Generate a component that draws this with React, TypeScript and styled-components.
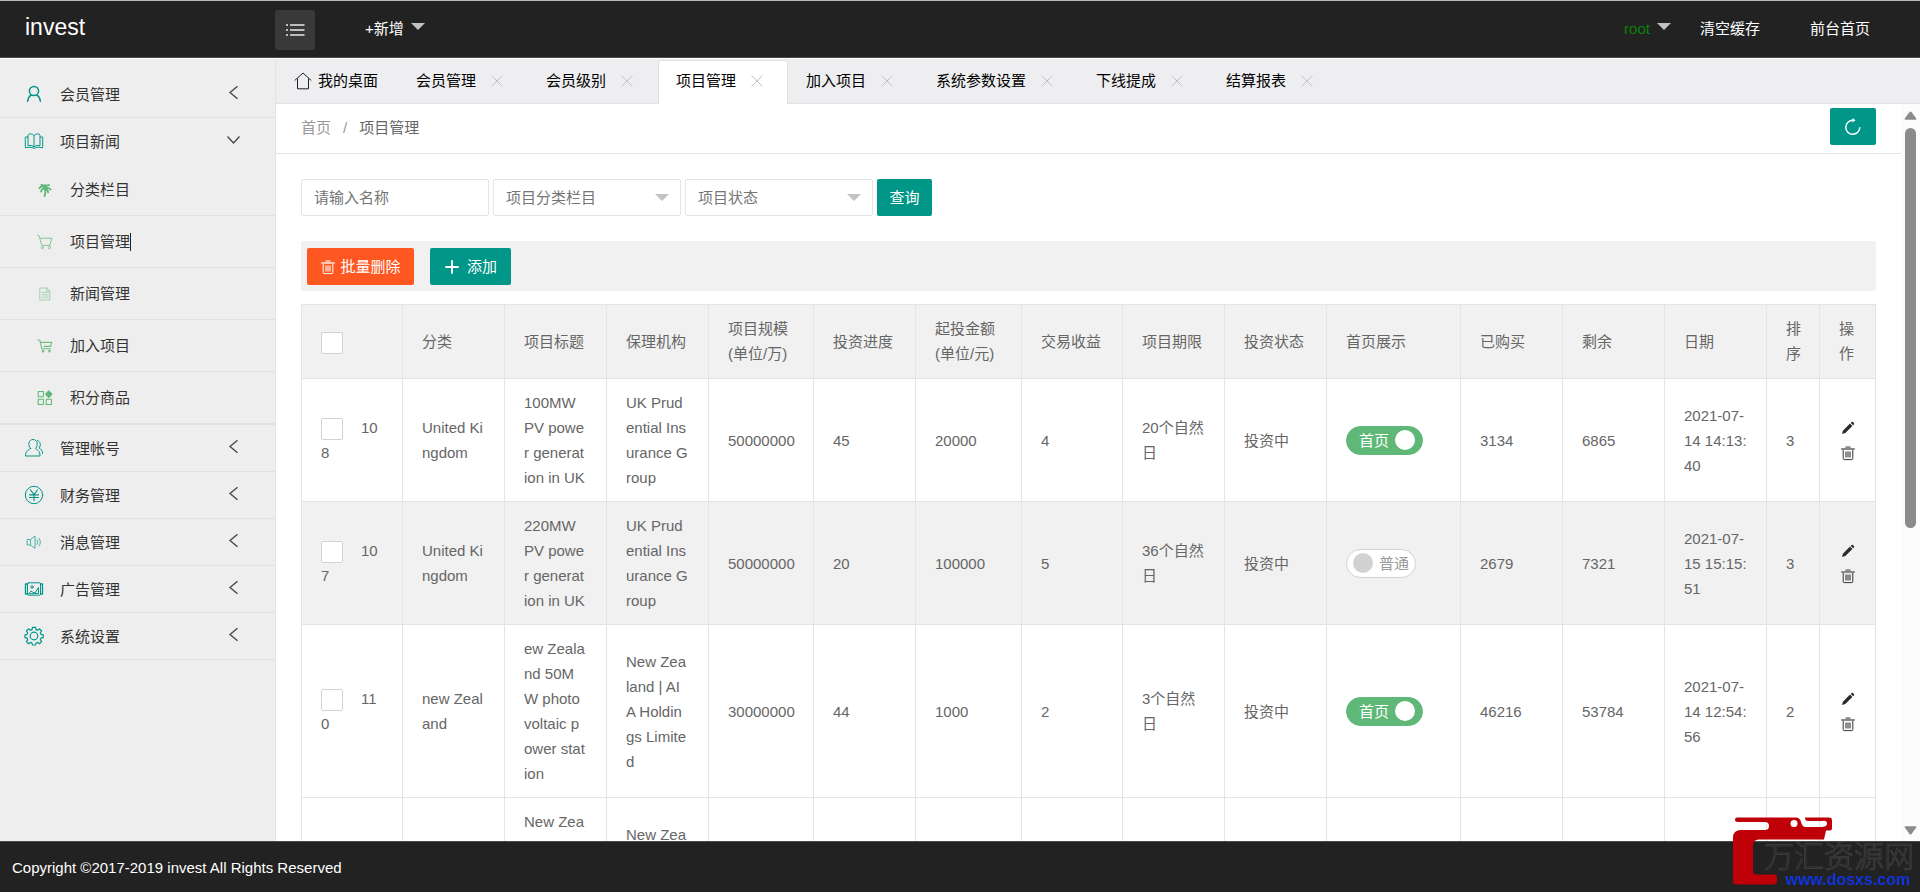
import React from "react";
import styled, { createGlobalStyle, css } from "styled-components";

const teal = "#009688";
const line = "#e4e4e4";

const GlobalStyle = createGlobalStyle`
  * { box-sizing: border-box; }
  body {
    margin: 0;
    background: #fff;
    color: #666;
    font: 15px/25px "Liberation Sans", "Noto Sans CJK SC", sans-serif;
  }
  button, input, select { font: inherit; color: inherit; }
  button { border: 0; padding: 0; background: none; cursor: pointer; }
  a { color: inherit; text-decoration: none; }
  svg { display: block; flex: none; }
`;

/* ---------- shell ---------- */

const Shell = styled.div`
  display: grid;
  grid-template: auto minmax(0, 1fr) auto / 276px minmax(0, 1fr);
  height: 100vh;
`;

const Header = styled.header`
  grid-column: 1 / -1;
  display: flex;
  align-items: center;
  height: 58px;
  margin-bottom: 1px;
  padding-right: 50px;
  background: #222;
  border-top: 1px solid #b4bab8;
  border-bottom: 1px solid #4c4848;
  color: #fff;
`;

const Brand = styled.a`
  width: 275px;
  padding: 0 0 4px 25px;
  font-size: 23px;
`;

const MenuToggle = styled.button`
  display: flex;
  align-items: center;
  justify-content: center;
  width: 40px;
  height: 40px;
  margin-top: 2px;
  border-radius: 3px;
  background: #393939;
`;

const TopMenu = styled.nav`
  display: flex;
  align-items: center;
  gap: 50px;
  flex: 1;
  padding: 0 0 2px 50px;
`;

const TopLink = styled.a`
  white-space: nowrap;
`;

const TopDrop = styled.button<{ $color?: string; $push?: boolean }>`
  display: flex;
  align-items: center;
  gap: 7px;
  color: ${(p) => p.$color ?? "#fff"};
  ${(p) => p.$push && css`margin: 0 -21px 0 auto;`}
  svg { margin-bottom: 4px; }
`;

const Footer = styled.footer`
  grid-column: 1 / -1;
  height: 51px;
  padding: 14px 12px 0;
  line-height: 24px;
  background: #222;
  border-top: 1px solid #4c4c4c;
  color: #fff;
`;

/* ---------- sidebar ---------- */

const Sidebar = styled.nav`
  padding-top: 12px;
  overflow: hidden;
  background: #eee;
  border-right: 1px solid ${line};
  color: #333;
`;

const Group = styled.div`
  border-bottom: 1px solid #e1e1e1;
`;

const GroupHead = styled.button`
  display: flex;
  align-items: center;
  width: 100%;
  height: 46px;
  padding: 0 34px 0 24px;
  text-align: left;
`;

const GroupName = styled.span`
  flex: 1;
  padding-left: 16px;
`;

const Arrow = styled.span`
  display: flex;
  justify-content: center;
  width: 15px;
  padding-bottom: 3px;
`;

const SubItem = styled.a`
  display: flex;
  align-items: center;
  height: 52px;
  padding-left: 37px;
  border-bottom: 1px solid #e1e1e1;
`;

const SubName = styled.span<{ $caret?: boolean }>`
  margin-left: 17px;
  line-height: 18px;
  ${(p) => p.$caret && css`box-shadow: 1px 0 0 #222;`}
`;

/* ---------- tabs ---------- */

const Main = styled.main`
  display: flex;
  flex-direction: column;
  min-width: 0;
`;

const TabBar = styled.div`
  display: flex;
  height: 45px;
  padding-top: 1px;
  background: #eeeef0;
  border-bottom: 1px solid #e2e2e2;
  color: #000;
`;

const HomeTab = styled.button`
  display: flex;
  align-items: center;
  gap: 6px;
  padding: 0 20px 2px 18px;
  color: #000;
`;

const Tab = styled.div<{ $active?: boolean }>`
  display: flex;
  align-items: center;
  gap: 14px;
  height: 44px;
  margin-bottom: -1px;
  padding: 0 23px 4px 17px;
  border: 1px solid transparent;
  border-width: 1px 1px 0;
  ${(p) =>
    p.$active &&
    css`
      background: #fff;
      border-color: #e2e2e2;
      border-radius: 3px 3px 0 0;
    `}
`;

/* ---------- page ---------- */

const Viewport = styled.div`
  display: flex;
  flex: 1;
  min-height: 0;
`;

const Page = styled.div`
  flex: 1;
  min-width: 0;
  overflow: hidden;
`;

const ScrollTrack = styled.div`
  display: flex;
  flex-direction: column;
  align-items: center;
  gap: 8px;
  width: 19px;
  padding: 7px 0 6px;
  background: #fcfcfc;
`;

const ScrollLane = styled.div`
  flex: 1;
  width: 11px;
`;

const ScrollThumb = styled.div`
  height: 58%;
  border-radius: 6px;
  background: #8b8b8b;
`;

const CrumbBar = styled.div`
  display: flex;
  align-items: center;
  justify-content: space-between;
  height: 50px;
  padding: 0 25px 2px;
  border-bottom: 1px solid #e2e2e2;
`;

const Crumbs = styled.div`
  display: flex;
  gap: 12px;
  color: #999;
`;

const Current = styled.span`
  color: #666;
`;

const Button = styled.button<{ $bg?: string; $width: number; $gap?: number }>`
  display: flex;
  align-items: center;
  justify-content: center;
  gap: ${(p) => p.$gap ?? 4}px;
  width: ${(p) => p.$width}px;
  height: 37px;
  border-radius: 2px;
  background: ${(p) => p.$bg ?? teal};
  color: #fff;
  white-space: nowrap;
`;

const RefreshButton = styled(Button)`
  margin-bottom: 2px;
`;

const Body = styled.div`
  padding: 25px 25px 0;
`;

const SearchRow = styled.form`
  display: flex;
  gap: 4px;
  margin-bottom: 25px;
`;

const Field = styled.div`
  position: relative;
  width: 188px;
  height: 37px;
  svg { position: absolute; right: 12px; top: 15px; pointer-events: none; }
`;

const fieldStyle = css`
  width: 100%;
  height: 100%;
  padding: 0 12px;
  border: 1px solid ${line};
  border-radius: 2px;
  background: #fff;
  color: #757575;
  outline: 0;
`;

const TextInput = styled.input`
  ${fieldStyle}
  &::placeholder { color: #757575; }
`;

const SelectBox = styled.select`
  ${fieldStyle}
  appearance: none;
`;

const Toolbar = styled.div`
  display: flex;
  gap: 16px;
  padding: 7px 6px 6px;
  margin-bottom: 13px;
  border-radius: 2px;
  background: #f1f1f1;
`;

/* ---------- table ---------- */

const Table = styled.table`
  width: 100%;
  table-layout: fixed;
  border-collapse: collapse;
`;

const Th = styled.th`
  padding: 11px 19px 12px;
  border: 1px solid ${line};
  background: #f1f1f1;
  font-weight: 400;
  text-align: left;
  word-break: break-all;
`;

const Td = styled.td<{ $nowrap?: boolean }>`
  padding: 11px 19px;
  border: 1px solid ${line};
  word-break: break-all;
  ${(p) => p.$nowrap && css`white-space: nowrap;`}
`;

const Row = styled.tr<{ $shade?: boolean }>`
  background: ${(p) => (p.$shade ? "#f1f1f1" : "#fff")};
`;

const Check = styled.input`
  appearance: none;
  display: inline-block;
  width: 22px;
  height: 22px;
  margin: 0 18px 0 0;
  border: 1px solid #d2d2d2;
  border-radius: 2px;
  background: #fff;
  vertical-align: middle;
`;

const SwitchInput = styled.input`
  position: absolute;
  inset: 0;
  margin: 0;
  opacity: 0;
`;

const SwitchTrack = styled.label<{ $on: boolean }>`
  position: relative;
  display: flex;
  align-items: center;
  flex-direction: ${(p) => (p.$on ? "row" : "row-reverse")};
  justify-content: space-between;
  width: ${(p) => (p.$on ? 77 : 70)}px;
  height: 29px;
  padding: ${(p) => (p.$on ? "0 7px 0 12px" : "0 6px")};
  border: 1px solid ${(p) => (p.$on ? "#5fb878" : "#d2d2d2")};
  border-radius: 15px;
  background: ${(p) => (p.$on ? "#5fb878" : "#fff")};
  color: ${(p) => (p.$on ? "#fff" : "#999")};
`;

const Knob = styled.span<{ $on: boolean }>`
  width: 20px;
  height: 20px;
  border-radius: 50%;
  background: ${(p) => (p.$on ? "#fff" : "#d2d2d2")};
`;

const RowAction = styled.button`
  display: flex;
  align-items: center;
  justify-content: center;
  width: 18px;
  height: 25px;
  color: #333;
`;

/* ---------- watermark ---------- */

const Mark = styled.a`
  position: fixed;
  right: 6px;
  bottom: 3px;
  width: 182px;
  height: 72px;
`;

const MarkArt = styled.svg`
  position: absolute;
  left: 0;
  top: 0;
`;

const MarkText = styled.div`
  position: absolute;
  right: 0;
  bottom: 2px;
  text-align: right;
`;

const MarkName = styled.div`
  font-size: 30px;
  font-weight: 300;
  line-height: 30px;
  color: #222;
  -webkit-text-stroke: 1px #3c3c3c;
`;

const MarkUrl = styled.div`
  padding-right: 4px;
  font-size: 16px;
  font-weight: 700;
  line-height: 15px;
  color: #0f34e0;
`;

/* ---------- icons ---------- */

type IconProps = { size?: number; color?: string; width?: number; children: React.ReactNode };

const Icon = ({ size = 20, color = "currentColor", width = 1, children }: IconProps) => (
  <svg
    width={size}
    height={size}
    viewBox="0 0 20 20"
    fill="none"
    stroke={color}
    strokeWidth={width}
    strokeLinecap="round"
    strokeLinejoin="round"
    aria-hidden="true"
  >
    {children}
  </svg>
);

const CaretDown = ({ color = "#c2c2c2" }: { color?: string }) => (
  <svg width="14" height="7" viewBox="0 0 14 7" aria-hidden="true">
    <path d="M0 0h14L7 7z" fill={color} />
  </svg>
);

const Close = () => (
  <svg width="14" height="14" viewBox="0 0 14 14" stroke="#c2c2c2" aria-hidden="true">
    <path d="M1.5 1.5l11 11M12.5 1.5l-11 11" />
  </svg>
);

const Chevron = ({ open }: { open?: boolean }) => (
  <svg width="15" height="15" viewBox="0 0 15 15" fill="none" stroke="#444" strokeWidth="1.3" aria-hidden="true">
    <path d={open ? "M1.5 4.5l6 6.5 6-6.5" : "M11.5 1.2L4 7.5l7.5 6.3"} />
  </svg>
);

const TrashIcon = ({ cap = "#888" }: { cap?: string }) => (
  <svg width="16" height="16" viewBox="0 0 16 16" fill="none" aria-hidden="true">
    <path d="M1.200 4h13.600M5.500 2.400h5" stroke={cap} strokeWidth="2.200" />
    <path d="M3.200 5v8.600q0 1 1 1h7.600q1 0 1-1V5" stroke="currentColor" strokeWidth="1" />
    <path d="M6 6.500v6M8 6.500v6M10 6.500v6" stroke="currentColor" strokeWidth="1.100" />
  </svg>
);

const groupIcons: Record<string, React.ReactNode> = {
  user: (
    <Icon color={teal} width={1.5}>
      <circle cx="10" cy="7" r="4.6" />
      <path d="M7.2 10.8Q4.2 12.8 3.600 17.200M12.8 10.8q3 2 3.600 6.400" />
    </Icon>
  ),
  book: (
    <Icon color={teal} width={1}>
      <path d="M10 4.5Q8.500 2.800 6.500 2.800 4.200 2.800 4 4.500v10.200q3.500-1 6 1 2.500-2 6-1V4.500Q15.800 2.800 13.500 2.800 11.500 2.800 10 4.500v11" />
      <path d="M3.800 6H1.300v10.800q5-1.500 8.700.4 3.700-1.900 8.700-.4V6h-2.500" />
    </Icon>
  ),
  users: (
    <Icon color={teal}>
      <path d="M6.500 10.500C3.500 7.500 4.500 1.500 9 1.500s5.500 6 2.500 9c1.500 1.500 4.500 2 4.500 7.500H1.500c0-5.500 3.500-6 5-7.500z" />
      <path d="M13.500 2.500c3 .8 3.800 5 1.500 7.500 2 1 3.500 2.500 3.700 5.500" />
    </Icon>
  ),
  yen: (
    <Icon color={teal}>
      <circle cx="10" cy="10" r="8.700" />
      <path d="M6.500 5l3.500 4.500L13.500 5M10 9.500v6M5.500 9.800h9M5.500 12.500h9" strokeWidth="1.200" />
    </Icon>
  ),
  sound: (
    <Icon color="#4bb0a5">
      <path d="M3.500 7.500h3v5.500h-3zM6.500 7.500L11 4v12.500L6.500 13M13 8q1.500 2.200 0 4.500M15 6.300q2.800 3.900 0 7.700" />
    </Icon>
  ),
  picture: (
    <Icon color={teal}>
      <rect x="3.500" y="3.800" width="13" height="12.400" rx="1" />
      <path d="M3.500 5h-2v10h2M16.500 5h2v10h-2" strokeWidth="1.300" />
      <circle cx="8" cy="8" r="1.200" />
      <path d="M5 14.500l2-2.500 1.500 1 2.500 1L14.500 8.500v5.500z" />
    </Icon>
  ),
  gear: (
    <Icon color={teal} width={1.2}>
      <circle cx="10" cy="10" r="3.800" />
      <path d="M8.400 1.300h3.200l.4 2.300 1.500.7 2-1.500 2.100 2.200-1.300 1.900.6 1.500 2.300.4v2.900l-2.300.4-.6 1.600 1.300 1.900-2.200 2.100-1.900-1.300-1.500.6-.4 2H8.400L8 17l-1.500-.6-1.900 1.300-2.200-2.100 1.300-1.900-.6-1.600-2.100-.4V8.800l2.100-.4.6-1.500-1.300-1.900L4.500 2.800l2 1.500L8 3.600z" />
    </Icon>
  ),
};

const green = "#5fb878";
const subIcons: Record<string, React.ReactNode> = {
  palm: (
    <Icon size={16} color={green} width={2.2}>
      <path d="M10 8Q6 3 3 8M10 8Q6 7.500 5 12M10 8Q8 3 5.500 3.500M10 8q2-5 5-4M10 8q4-2 7 1.500M10 8q3.500 1 4 5M10 8v-4.500" />
      <path d="M10 8q1.500 4-.5 9.500" strokeWidth="2.400" />
    </Icon>
  ),
  cart: (
    <Icon size={16} color="#7cc48f" width={1.2}>
      <path d="M.8 1.500l1.700.6L6 14.200h10.500M4.500 5.300h14l-2.200 8" />
      <circle cx="6.800" cy="17" r="1.400" />
      <circle cx="15.500" cy="17" r="1.400" />
    </Icon>
  ),
  doc: (
    <Icon size={16} color="#8fca9e">
      <path d="M4 2.500h8l4 3.500v11.500H4zM12 2.500V6h4M6 8h8M6 11h8M6 14h8" />
    </Icon>
  ),
  cartFull: (
    <Icon size={16} color="#6fbf85" width={1.4}>
      <path d="M1 2.500h2.500L6 13.500h11M4 5.500h14.500L17 10.500H9" />
      <circle cx="7.500" cy="16.500" r="1" />
      <circle cx="15.500" cy="16.500" r="1" />
    </Icon>
  ),
  blocks: (
    <Icon size={16} color={green} width={1.3}>
      <path d="M1.500 2h6.500v6.500H1.500zM1.500 11.500h6.500V18H1.500zM11.500 11.500H18V18h-6.500z" />
      <path d="M14.700 1l4 4.200-4 4.200-4-4.200z" fill={green} />
    </Icon>
  ),
};

/* ---------- data ---------- */

const subItems = [
  { icon: "palm", name: "分类栏目" },
  { icon: "cart", name: "项目管理", caret: true },
  { icon: "doc", name: "新闻管理" },
  { icon: "cartFull", name: "加入项目" },
  { icon: "blocks", name: "积分商品" },
];

const groups = [
  { icon: "user", name: "会员管理" },
  { icon: "book", name: "项目新闻", open: true },
  { icon: "users", name: "管理帐号" },
  { icon: "yen", name: "财务管理" },
  { icon: "sound", name: "消息管理" },
  { icon: "picture", name: "广告管理" },
  { icon: "gear", name: "系统设置" },
];

const tabs = ["会员管理", "会员级别", "项目管理", "加入项目", "系统参数设置", "下线提成", "结算报表"];

const columns: [string, number][] = [
  ["分类", 102],
  ["项目标题", 102],
  ["保理机构", 102],
  ["项目规模(单位/万)", 105],
  ["投资进度", 102],
  ["起投金额(单位/元)", 106],
  ["交易收益", 101],
  ["项目期限", 102],
  ["投资状态", 102],
  ["首页展示", 134],
  ["已购买", 102],
  ["剩余", 102],
  ["日期", 102],
  ["排序", 53],
  ["操作", 56],
];

type Project = {
  id: string;
  title: string[];
  numbers: string[];
  term: string[];
  home: boolean;
  sales: string[];
  hovered?: boolean;
};

const projects: Project[] = [
  {
    id: "108",
    title: ["United Kingdom", "100MW PV power generation in UK", "UK Prudential Insurance Group"],
    numbers: ["50000000", "45", "20000", "4"],
    term: ["20个自然日", "投资中"],
    home: true,
    sales: ["3134", "6865", "2021-07-14 14:13:40", "3"],
  },
  {
    id: "107",
    title: ["United Kingdom", "220MW PV power generation in UK", "UK Prudential Insurance Group"],
    numbers: ["50000000", "20", "100000", "5"],
    term: ["36个自然日", "投资中"],
    home: false,
    sales: ["2679", "7321", "2021-07-15 15:15:51", "3"],
    hovered: true,
  },
  {
    id: "110",
    title: ["new Zealand", "ew Zealand 50MW photovoltaic power station", "New Zealand | AIA Holdings Limited"],
    numbers: ["30000000", "44", "1000", "2"],
    term: ["3个自然日", "投资中"],
    home: true,
    sales: ["46216", "53784", "2021-07-14 12:54:56", "2"],
  },
  {
    id: "109",
    title: ["new Zealand", "New Zealand 50MW photovoltaic power station", "New Zealand | AIA Holdings Limited"],
    numbers: ["30000000", "40", "5000", "3"],
    term: ["5个自然日", "投资中"],
    home: true,
    sales: ["3120", "6880", "2021-07-14 12:50:12", "2"],
  },
];

/* ---------- parts ---------- */

const ProjectRow = ({ project }: { project: Project }) => (
  <Row $shade={project.hovered}>
    <Td>
      <Check type="checkbox" id={`pick-${project.id}`} />
      <label htmlFor={`pick-${project.id}`}>{project.id}</label>
    </Td>
    {project.title.map((value, i) => (
      <Td key={i}>{value}</Td>
    ))}
    {project.numbers.map((value, i) => (
      <Td key={i} $nowrap>
        {value}
      </Td>
    ))}
    {project.term.map((value, i) => (
      <Td key={i}>{value}</Td>
    ))}
    <Td>
      <SwitchTrack $on={project.home}>
        <SwitchInput type="checkbox" role="switch" defaultChecked={project.home} />
        <span>{project.home ? "首页" : "普通"}</span>
        <Knob $on={project.home} />
      </SwitchTrack>
    </Td>
    {project.sales.map((value, i) => (
      <Td key={i}>{value}</Td>
    ))}
    <Td>
      <RowAction type="button" aria-label="编辑">
        <svg width="14" height="14" viewBox="0 0 14 14" fill="#2b2b2b" aria-hidden="true">
          <path d="M1 13l.9-3.300L9 2.600 11.400 5 4.300 12.100zM9.800 1.900l.8-.8q.7-.7 1.400 0l.9.900q.7.700 0 1.400l-.8.800z" />
        </svg>
      </RowAction>
      <RowAction type="button" aria-label="删除">
        <TrashIcon />
      </RowAction>
    </Td>
  </Row>
);

export default function App() {
  return (
    <>
      <GlobalStyle />
      <Shell>
        <Header>
          <Brand href="#">invest</Brand>
          <MenuToggle type="button" aria-label="菜单">
            <svg width="20" height="14" viewBox="0 0 20 14" stroke="#e8e8e8" strokeWidth="1.500" aria-hidden="true">
              <path d="M5 2h14.500M5 7h14.500M5 12h14.500M1 2h2M1 7h2M1 12h2" />
            </svg>
          </MenuToggle>
          <TopMenu>
            <TopDrop type="button">
              +新增 <CaretDown />
            </TopDrop>
            <TopDrop type="button" $color="#0a800a" $push>
              root <CaretDown />
            </TopDrop>
            <TopLink href="#">清空缓存</TopLink>
            <TopLink href="#">前台首页</TopLink>
          </TopMenu>
        </Header>

        <Sidebar>
          {groups.map((group) => (
            <Group key={group.name}>
              <GroupHead type="button">
                {groupIcons[group.icon]}
                <GroupName>{group.name}</GroupName>
                <Arrow>
                  <Chevron open={group.open} />
                </Arrow>
              </GroupHead>
              {group.open &&
                subItems.map((item) => (
                  <SubItem href="#" key={item.name}>
                    {subIcons[item.icon]}
                    <SubName $caret={item.caret}>{item.name}</SubName>
                  </SubItem>
                ))}
            </Group>
          ))}
        </Sidebar>

        <Main>
          <TabBar>
            <HomeTab type="button">
              <svg width="18" height="18" viewBox="0 0 18 18" fill="none" stroke="#222" aria-hidden="true">
                <path d="M.7 8.500L9 1l8.300 7.500M3.500 6.500v10.300h11V6.500" />
              </svg>
              我的桌面
            </HomeTab>
            {tabs.map((tab) => (
              <Tab key={tab} $active={tab === "项目管理"}>
                <button type="button">{tab}</button>
                <button type="button" aria-label={`关闭${tab}`}>
                  <Close />
                </button>
              </Tab>
            ))}
          </TabBar>

          <Viewport>
            <Page>
              <CrumbBar>
                <Crumbs>
                  <a href="#">首页</a>
                  <span>/</span>
                  <Current>项目管理</Current>
                </Crumbs>
                <RefreshButton type="button" $width={46} aria-label="刷新">
                  <svg width="18" height="18" viewBox="0 0 18 18" fill="none" stroke="#fff" strokeWidth="1.500" aria-hidden="true">
                    <path d="M9 2.300a7 7 0 1 0 6.800 7" />
                    <path d="M8.500 0l3 2.300-3 2.300z" fill="#fff" stroke="none" />
                  </svg>
                </RefreshButton>
              </CrumbBar>

              <Body>
                <SearchRow onSubmit={(e) => e.preventDefault()}>
                  <Field>
                    <TextInput type="text" placeholder="请输入名称" aria-label="名称" />
                  </Field>
                  <Field>
                    <SelectBox aria-label="项目分类栏目">
                      <option>项目分类栏目</option>
                    </SelectBox>
                    <CaretDown />
                  </Field>
                  <Field>
                    <SelectBox aria-label="项目状态">
                      <option>项目状态</option>
                    </SelectBox>
                    <CaretDown />
                  </Field>
                  <Button type="submit" $width={55}>
                    查询
                  </Button>
                </SearchRow>

                <Toolbar>
                  <Button type="button" $bg="#ff5722" $width={107}>
                    <TrashIcon cap="#ffc4b0" />
                    批量删除
                  </Button>
                  <Button type="button" $width={81} $gap={7}>
                    <Icon size={16} width={2.4}>
                      <path d="M10 2.500v15M2.500 10h15" />
                    </Icon>
                    添加
                  </Button>
                </Toolbar>

                <Table>
                  <colgroup>
                    <col width={101} />
                    {columns.map(([name, width]) => (
                      <col key={name} width={width} />
                    ))}
                  </colgroup>
                  <thead>
                    <tr>
                      <Th>
                        <Check type="checkbox" aria-label="全选" />
                      </Th>
                      {columns.map(([name]) => (
                        <Th key={name}>{name}</Th>
                      ))}
                    </tr>
                  </thead>
                  <tbody>
                    {projects.map((project) => (
                      <ProjectRow key={project.id} project={project} />
                    ))}
                  </tbody>
                </Table>
              </Body>
            </Page>
            <ScrollTrack aria-hidden="true">
              <svg width="13" height="9" viewBox="0 0 13 9">
                <path d="M6.500.500q.6 0 1 .6l4.800 6.400q.5 1-.6 1.200H1.300q-1.100-.2-.6-1.200L5.500 1.100q.4-.6 1-.6z" fill="#8b8b8b" />
              </svg>
              <ScrollLane>
                <ScrollThumb />
              </ScrollLane>
              <svg width="13" height="9" viewBox="0 0 13 9">
                <path d="M6.500 8.500q.6 0 1-.6l4.800-6.400q.5-1-.6-1.200H1.300Q.2.500.7 1.500l4.800 6.400q.4.600 1 .6z" fill="#8b8b8b" />
              </svg>
            </ScrollTrack>
          </Viewport>
        </Main>

        <Footer>Copyright ©2017-2019 invest All Rights Reserved</Footer>
      </Shell>

      <Mark href="#">
        <MarkArt width="101" height="69" viewBox="0 0 101 69" aria-hidden="true">
          <path
            d="M5 .500h59q4 0 5 4.500 1 4.500 4 5h16q6 0 6-3.500T90 4H76q-3 0-3-3.500h24q3 0 3 3v8q0 2-2 2h-4l-2 9H27q-6 0-6 6v26q0 3 3 3h18q3 0 3 3v3q0 4-4 4H4q-3 0-3-3V21q0-8 8-8h24q4 0 4-4t-4-4H6q-3 0-3-2.200T5 .500z"
            fill="#c00008"
          />
          <circle cx="62" cy="6.500" r="3.500" fill="#fff" />
        </MarkArt>
        <MarkText>
          <MarkName>万汇资源网</MarkName>
          <MarkUrl>www.dosxs.com</MarkUrl>
        </MarkText>
      </Mark>
    </>
  );
}
